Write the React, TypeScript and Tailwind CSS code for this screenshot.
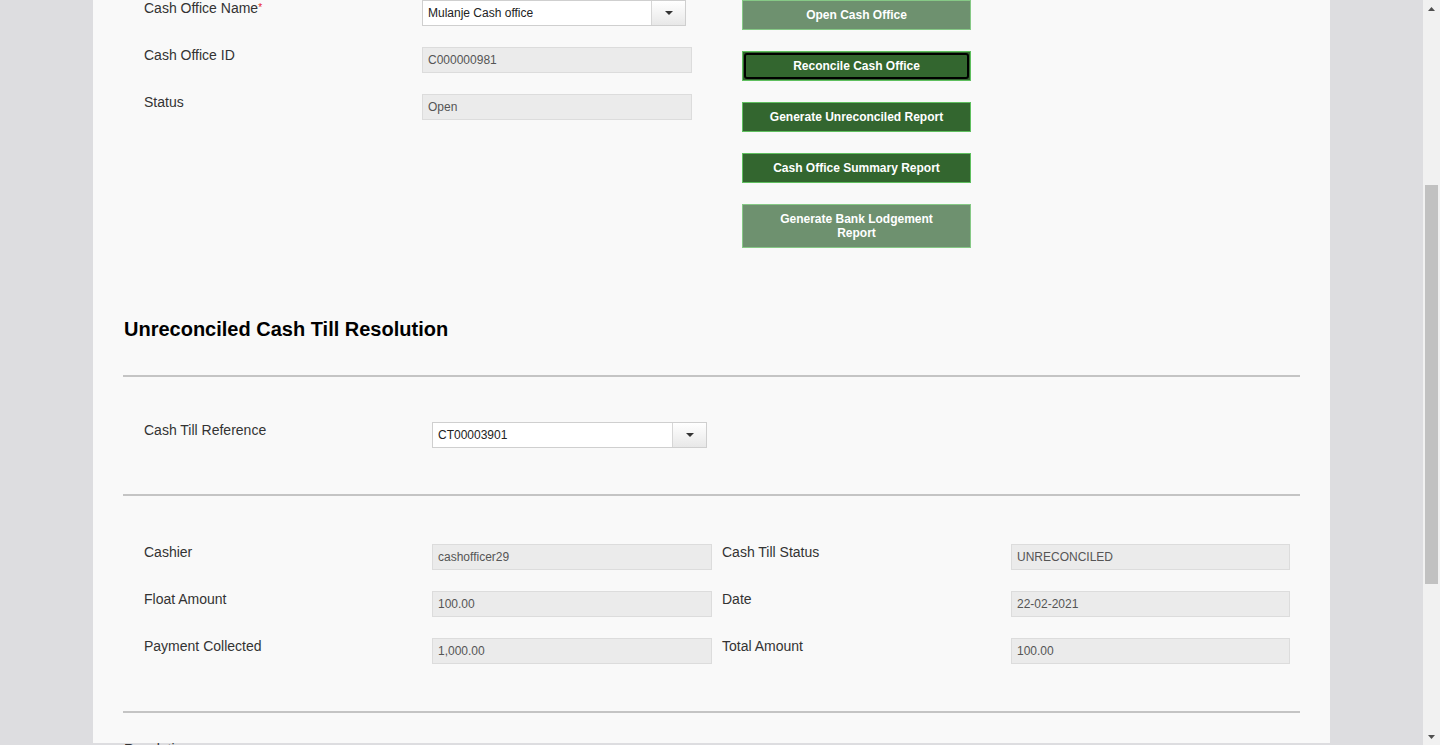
const font = { fontFamily: '"Liberation Sans", Arial, sans-serif' };

function Caret() {
  return (
    <svg width="8" height="4" viewBox="0 0 8 4" className="block">
      <path d="M0 0h8L4 4z" fill="#333" />
    </svg>
  );
}

function Select({ value, width }: { value: string; width: string }) {
  return (
    <div className={`flex h-[26px] ${width} border border-[#cfcfcf] bg-white`}>
      <div className="flex-1 px-[5px] text-[12px] leading-[24px] text-[#222]">{value}</div>
      <div className="flex w-[34px] items-center justify-center border-l border-[#d6d6d6] bg-gradient-to-b from-white to-[#e8e8e8]">
        <Caret />
      </div>
    </div>
  );
}

function ReadOnly({ value, width }: { value: string; width: string }) {
  return (
    <div className={`h-[26px] ${width} border border-[#dcdcdc] bg-[#ebebeb] px-[5px] text-[12px] leading-[24px] text-[#555]`}>
      {value}
    </div>
  );
}

function Label({ children, width }: { children: React.ReactNode; width: string }) {
  return <div className={`${width} shrink-0 text-[14px] leading-[20px] text-[#333]`}>{children}</div>;
}

const actions = [
  { label: "Open Cash Office", kind: "off" },
  { label: "Reconcile Cash Office", kind: "focus" },
  { label: "Generate Unreconciled Report", kind: "on" },
  { label: "Cash Office Summary Report", kind: "on" },
  { label: "Generate Bank Lodgement Report", kind: "off", tall: true },
];

const details = [
  ["Cashier", "cashofficer29", "Cash Till Status", "UNRECONCILED"],
  ["Float Amount", "100.00", "Date", "22-02-2021"],
  ["Payment Collected", "1,000.00", "Total Amount", "100.00"],
];

export default function App() {
  return (
    <div className="flex h-[745px] w-[1440px] overflow-hidden bg-[#dddde0]" style={font}>
      <div className="flex-1 overflow-hidden">
        <div className="ml-[93px] h-full w-[1237px] bg-[#f9f9f9] px-[30px]">
          {/* top form + actions */}
          <div className="-mt-[2px] flex pl-[21px]">
            <div className="w-[598px]">
              <div className="mb-[19px] flex items-start">
                <Label width="w-[278px]">
                  Cash Office Name<span className="align-top text-[10px] text-[#e8232a]">*</span>
                </Label>
                <div className="mt-[2px]">
                  <Select value="Mulanje Cash office" width="w-[264px]" />
                </div>
              </div>
              <div className="mb-[19px] flex items-start">
                <Label width="w-[278px]">Cash Office ID</Label>
                <div className="mt-[2px]">
                  <ReadOnly value="C000000981" width="w-[270px]" />
                </div>
              </div>
              <div className="flex items-start">
                <Label width="w-[278px]">Status</Label>
                <div className="mt-[2px]">
                  <ReadOnly value="Open" width="w-[270px]" />
                </div>
              </div>
            </div>
            <div className="mt-[2px] flex w-[229px] flex-col gap-[21px]">
              {actions.map((a) => (
                <button
                  key={a.label}
                  className={`flex w-[229px] items-center justify-center border text-center text-[12px] font-bold leading-[14px] text-white ${
                    a.tall ? "h-[44px]" : "h-[30px]"
                  } ${a.kind === "off" ? "border-[#86c986] bg-[#6e916f]" : "border-[#5fbf5f] bg-[#33662f]"} ${
                    a.kind === "focus" ? "p-[1px]" : "px-[18px]"
                  }`}
                >
                  {a.kind === "focus" ? (
                    <span className="flex h-full w-full items-center justify-center rounded-[3px] border-2 border-black">
                      {a.label}
                    </span>
                  ) : (
                    a.label
                  )}
                </button>
              ))}
            </div>
          </div>

          {/* section heading */}
          <h2 className="ml-[1px] mt-[69px] text-[20px] font-bold leading-[24px] text-black">
            Unreconciled Cash Till Resolution
          </h2>
          <div className="mt-[34px] border-t-2 border-[#c4c4c4]" />

          <div className="mt-[43px] flex items-start pl-[21px]">
            <Label width="w-[288px]">Cash Till Reference</Label>
            <div className="mt-[2px]">
              <Select value="CT00003901" width="w-[275px]" />
            </div>
          </div>
          <div className="mt-[46px] border-t-2 border-[#c4c4c4]" />

          <div className="mt-[46px] flex flex-col gap-[19px] pl-[21px]">
            {details.map(([l1, v1, l2, v2]) => (
              <div key={l1} className="flex items-start">
                <Label width="w-[288px]">{l1}</Label>
                <div className="mt-[2px]">
                  <ReadOnly value={v1} width="w-[280px]" />
                </div>
                <div className="ml-[10px]">
                  <Label width="w-[289px]">{l2}</Label>
                </div>
                <div className="mt-[2px]">
                  <ReadOnly value={v2} width="w-[279px]" />
                </div>
              </div>
            ))}
          </div>
          <div className="mt-[47px] border-t-2 border-[#c4c4c4]" />
          <div className="ml-[1px] mt-[26px] text-[14px] leading-[20px] text-[#333]">Resolution</div>
        </div>
      </div>

      {/* scrollbar */}
      <div className="flex w-[17px] flex-col bg-[#f1f1f1]">
        <div className="flex h-[17px] items-center justify-center">
          <svg width="7" height="4" viewBox="0 0 7 4">
            <path d="M0 4h7L3.5 0z" fill="#505050" />
          </svg>
        </div>
        <div className="ml-[2px] mt-[168px] h-[399px] w-[13px] bg-[#c1c1c1]" />
        <div className="flex-1" />
        <div className="flex h-[17px] items-center justify-center">
          <svg width="7" height="4" viewBox="0 0 7 4">
            <path d="M0 0h7L3.5 4z" fill="#505050" />
          </svg>
        </div>
      </div>
    </div>
  );
}
